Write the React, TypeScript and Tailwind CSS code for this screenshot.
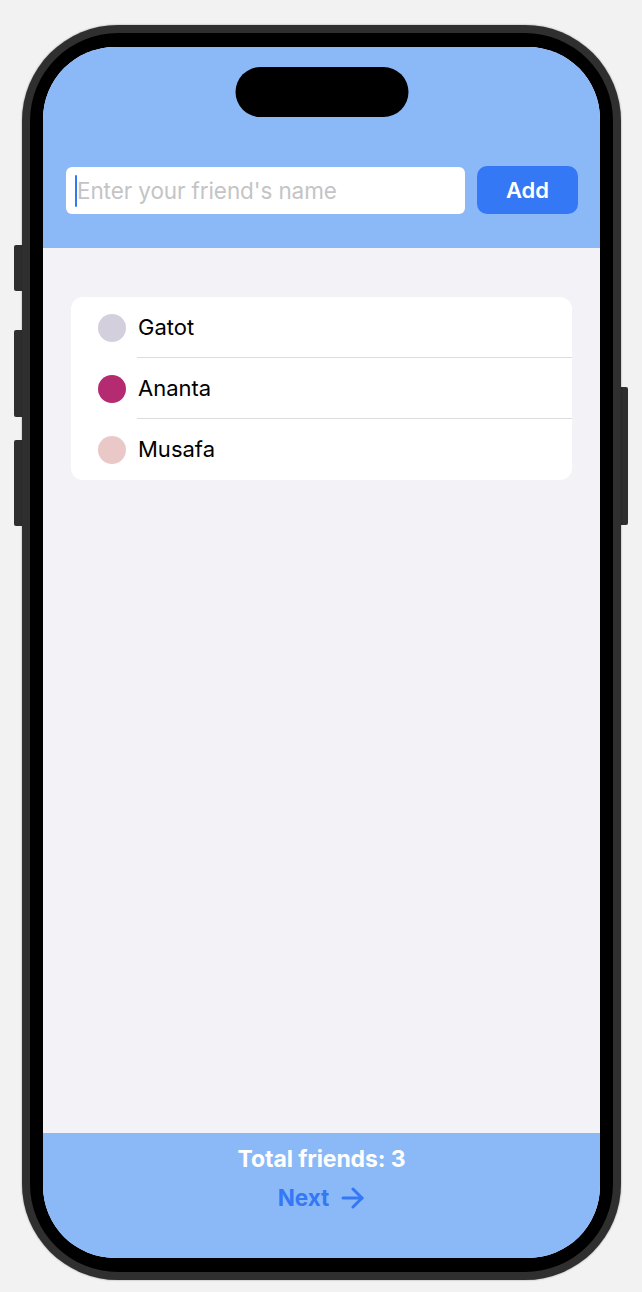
import React from "react";

const friends = [
  { name: "Gatot", color: "#d4cfdd" },
  { name: "Ananta", color: "#b42b72" },
  { name: "Musafa", color: "#ebc8c8" },
];

export default function App() {
  return (
    <div
      className="w-[642px] h-[1292px] bg-[#f2f2f2] pt-[25px] pl-[22px]"
      style={{ fontFamily: "Inter, 'Noto Sans', sans-serif" }}
    >
      <div className="relative w-[599px] h-[1255px]">
        {/* side buttons */}
        <div className="absolute left-[-8px] top-[220px] w-[9px] h-[46px] rounded-l-[2px] bg-[#2f2f2f]" />
        <div className="absolute left-[-8px] top-[305px] w-[9px] h-[87px] rounded-l-[2px] bg-[#2f2f2f]" />
        <div className="absolute left-[-8px] top-[415px] w-[9px] h-[86px] rounded-l-[2px] bg-[#2f2f2f]" />
        <div className="absolute right-[-7px] top-[362px] w-[8px] h-[138px] rounded-r-[2px] bg-[#2f2f2f]" />

        <div className="relative w-full h-full rounded-[96px] bg-[#2f2f2f] p-[8px] shadow-[0_0_2px_rgba(0,0,0,0.4)]">
          <div className="w-full h-full rounded-[88px] bg-black px-[13px] py-[14px]">
            <div className="relative w-full h-full rounded-[72px] overflow-hidden bg-[#f2f2f7] flex flex-col">
              {/* dynamic island */}
              <div className="absolute top-[20px] left-1/2 -translate-x-1/2 w-[173px] h-[50px] rounded-full bg-black" />

              {/* header */}
              <div className="h-[201px] bg-[#8bb9f8] pt-[119px] pl-[23px] pr-[22px] flex gap-[12px] items-start">
                <div className="w-[399px] h-[47px] mt-[1px] bg-white rounded-[6px] flex items-center pl-[9px]">
                  <div className="w-[2px] h-[32px] bg-[#3478f6] rounded-full" />
                  <span className="text-[22.5px] text-[#c4c4c6] tracking-[-0.1px]">
                    Enter your friend's name
                  </span>
                </div>
                <button className="w-[101px] h-[48px] rounded-[10px] bg-[#3478f6] text-white text-[22px] font-semibold flex items-center justify-center">
                  Add
                </button>
              </div>

              {/* body */}
              <div className="flex-1 px-[28px] pt-[49px]">
                <div className="bg-white rounded-[12px] overflow-hidden">
                  {friends.map((f, i) => (
                    <div key={f.name} className="flex items-stretch h-[61px] pl-[27px]">
                      <div className="flex items-center pr-[11px]">
                        <div className="w-[28px] h-[28px] rounded-full" style={{ background: f.color }} />
                      </div>
                      <div
                        className={
                          "flex-1 flex items-center pl-[1px] text-[22px] text-black " +
                          (i < friends.length - 1 ? "border-b border-[#dcdce0]" : "")
                        }
                      >
                        {f.name}
                      </div>
                    </div>
                  ))}
                </div>
              </div>

              {/* footer */}
              <div className="h-[125px] bg-[#8bb9f8] flex flex-col items-center pt-[12px]">
                <div className="text-white text-[23px] font-bold leading-[28px] tracking-[-0.1px]">
                  Total friends: 3
                </div>
                <div className="mt-[11px] flex items-center gap-[12px] text-[#3478f6] text-[22.5px] font-bold leading-[28px]">
                  <span>Next</span>
                  <svg width="24" height="22" viewBox="0 0 24 22" fill="none" stroke="#3478f6" strokeWidth="3" strokeLinecap="round" strokeLinejoin="round">
                    <path d="M2 11h19" />
                    <path d="M12 2l9 9-9 9" />
                  </svg>
                </div>
              </div>
            </div>
          </div>
        </div>
      </div>
    </div>
  );
}
